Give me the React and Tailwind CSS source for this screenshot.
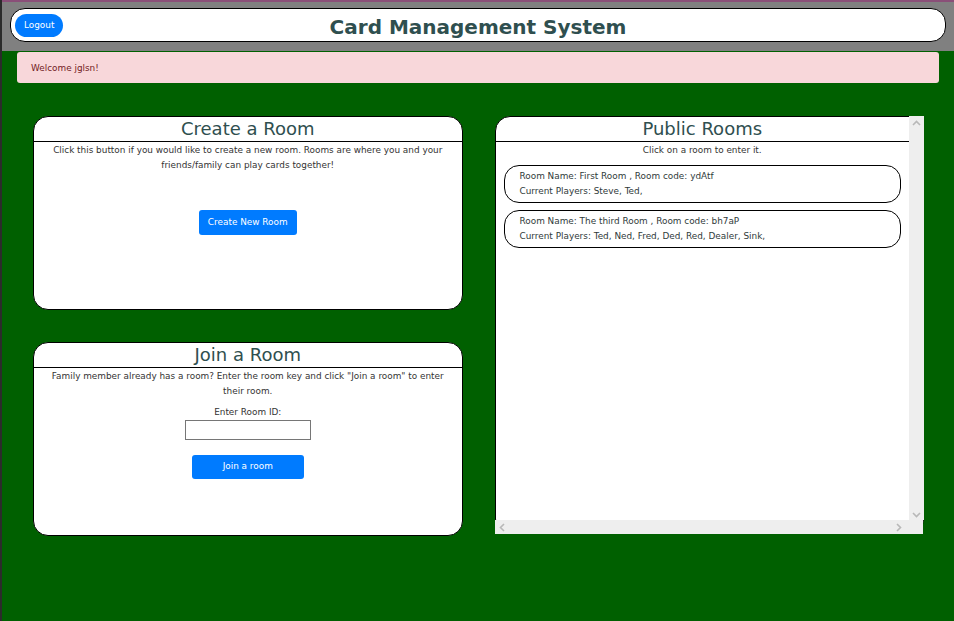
const rooms = [
  { name: 'First Room', code: 'ydAtf', players: ['Steve', 'Ted'] },
  { name: 'The third Room', code: 'bh7aP', players: ['Ted', 'Ned', 'Fred', 'Ded', 'Red', 'Dealer', 'Sink'] },
]

const font = { fontFamily: '"DejaVu Sans", Verdana, sans-serif' }

const CardTitle = ({ children }) => (
  <div className="border-b border-black text-center text-[18px] leading-[24px] text-[#2f4f4f]">{children}</div>
)

const RoomItem = ({ room }) => (
  <div className="cursor-pointer rounded-[15px] border border-black px-[15px] py-[3px] text-[8.9px] leading-[15px] text-[#2f3a3a]">
    <div>
      Room Name: {room.name} , Room code: {room.code}
    </div>
    <div>Current Players: {room.players.map((p) => p + ', ')}</div>
  </div>
)

export default function App() {
  return (
    <div className="min-h-screen border-l-2 border-[#2b2b2b] bg-[#006000]" style={font}>
      <div className="border-t-2 border-[#8a4f78] bg-[#808080] px-[8px] pb-[9px] pt-[6px]">
        <div className="relative flex h-[34px] items-center justify-center rounded-[15px] border border-black bg-white">
          <button className="absolute left-[4px] top-[5px] h-[23px] rounded-full bg-[#007bff] px-[9px] text-[8.9px] text-white">
            Logout
          </button>
          <h1 className="pt-[3px] text-[20px] font-bold text-[#2f4f4f]">Card Management System</h1>
        </div>
      </div>
      <div className="px-[15px] pt-px">
        <div className="flex h-[31px] items-center rounded-[3px] bg-[#f8d7da] px-[14px] pt-[2px] text-[8.9px] text-[#721c24]">
          Welcome jglsn!
        </div>
      </div>

      <div className="grid grid-cols-2 gap-[32px] pl-[31px] pr-[30px] pt-[33px]">
        <div className="flex flex-col gap-[32px]">
          <div className="h-[194px] rounded-[15px] border border-black bg-white">
            <CardTitle>Create a Room</CardTitle>
            <p className="px-[12px] pt-px text-center text-[8.9px] leading-[15px] text-[#333]">
              Click this button if you would like to create a new room. Rooms are where you and your friends/family can play cards together!
            </p>
            <div className="flex justify-center pt-[37px]">
              <button className="h-[25px] rounded-[3px] bg-[#007bff] px-[9px] text-[8.9px] text-white">Create New Room</button>
            </div>
          </div>

          <div className="h-[194px] rounded-[15px] border border-black bg-white">
            <CardTitle>Join a Room</CardTitle>
            <p className="px-[12px] pt-px text-center text-[8.9px] leading-[15px] text-[#333]">
              Family member already has a room? Enter the room key and click "Join a room" to enter their room.
            </p>
            <div className="flex flex-col items-center pt-[7px]">
              <label className="text-[8.9px] leading-[13px] text-[#333]">Enter Room ID:</label>
              <input className="mt-px h-[20px] w-[126px] border border-[#767676] bg-white" />
              <button className="mt-[15px] h-[24px] w-[112px] rounded-[3px] bg-[#007bff] text-[8.9px] text-white">Join a room</button>
            </div>
          </div>
        </div>

        <div className="flex h-[418px] flex-col rounded-[15px] border border-black bg-white">
          <div className="flex min-h-0 flex-1">
            <div className="flex-1">
              <CardTitle>Public Rooms</CardTitle>
              <p className="pt-px text-center text-[8.9px] leading-[15px] text-[#333]">Click on a room to enter it.</p>
              <div className="flex flex-col gap-[7px] px-[8px] pt-[7px]">
                {rooms.map((room) => (
                  <RoomItem key={room.code} room={room} />
                ))}
              </div>
            </div>
            <div className="-mr-px -mt-px flex w-[15px] flex-col items-center justify-between bg-[#eeeeee] pb-[2px] pt-[4px]">
              <svg width="9" height="6" viewBox="0 0 9 6" fill="none" stroke="#b8b8b8" strokeWidth="1.6">
                <path d="M1 5 L4.5 1.5 L8 5" />
              </svg>
              <svg width="9" height="6" viewBox="0 0 9 6" fill="none" stroke="#b8b8b8" strokeWidth="1.6">
                <path d="M1 1 L4.5 4.5 L8 1" />
              </svg>
            </div>
          </div>
          <div className="-mb-px -ml-px flex h-[14px] items-center justify-between bg-[#eeeeee] pl-[4px] pr-[21px]">
            <svg width="6" height="9" viewBox="0 0 6 9" fill="none" stroke="#b8b8b8" strokeWidth="1.6">
              <path d="M5 1 L1.5 4.5 L5 8" />
            </svg>
            <svg width="6" height="9" viewBox="0 0 6 9" fill="none" stroke="#b8b8b8" strokeWidth="1.6">
              <path d="M1 1 L4.5 4.5 L1 8" />
            </svg>
          </div>
        </div>
      </div>
    </div>
  )
}
